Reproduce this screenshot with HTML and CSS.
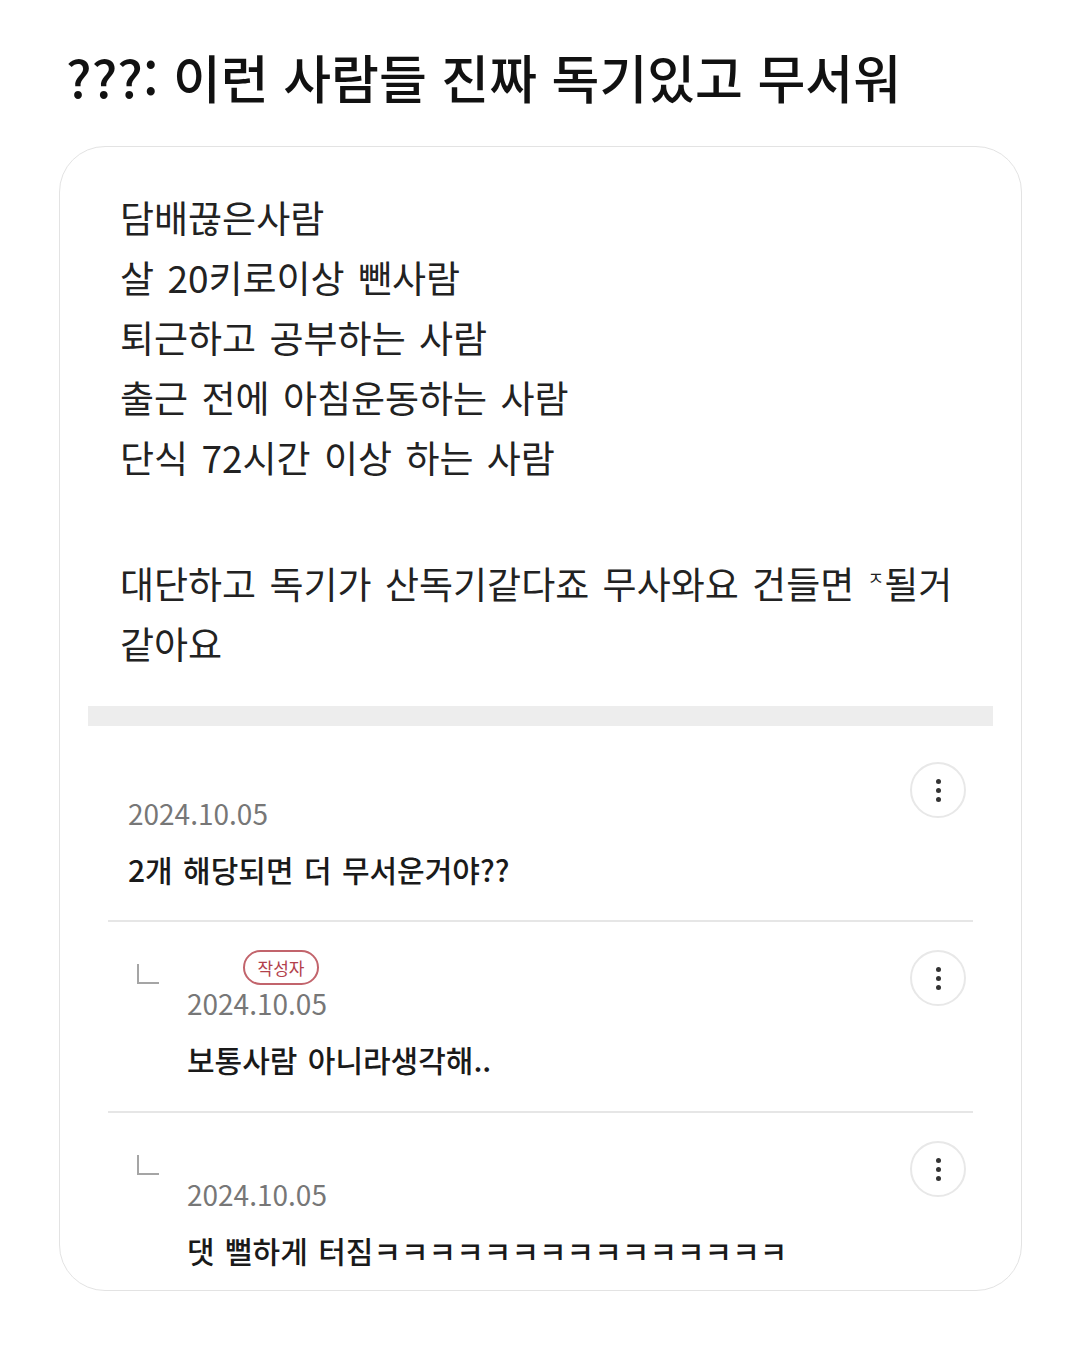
FILE: index.html
```html
<!DOCTYPE html>
<html lang="ko">
<head>
    <meta charset="UTF-8">
    <meta name="viewport" content="width=device-width, initial-scale=1.0">
    <title>독기</title>
    <link rel="stylesheet" href="styles.css">
</head>
<body>
    <h1 class="title">???: 이런 사람들 진짜 독기있고 무서워</h1>

    <div class="card">
        <div class="post">
            <p>담배끊은사람</p>
            <p>살 20키로이상 뺀사람</p>
            <p>퇴근하고 공부하는 사람</p>
            <p>출근 전에 아침운동하는 사람</p>
            <p>단식 72시간 이상 하는 사람</p>
            <p>&nbsp;</p>
            <p>대단하고 독기가 산독기같다죠 무사와요 건들면 <span class="jamo">ㅈ</span>될거<br>같아요</p>
        </div>

        <div class="bar"></div>

        <div class="comments">
            <div class="comment">
                <div class="main">
                    <div class="date">2024.10.05</div>
                    <div class="text">2개 해당되면 더 무서운거야??</div>
                </div>
                <div class="kebab"><span></span><span></span><span></span></div>
            </div>

            <div class="comment reply">
                <div class="arrow"></div>
                <div class="main">
                    <div class="meta"><span class="badge">작성자</span></div>
                    <div class="date">2024.10.05</div>
                    <div class="text">보통사람 아니라생각해..</div>
                </div>
                <div class="kebab"><span></span><span></span><span></span></div>
            </div>

            <div class="comment reply">
                <div class="arrow"></div>
                <div class="main">
                    <div class="meta"></div>
                    <div class="date">2024.10.05</div>
                    <div class="text">댓 뻘하게 터짐ㅋㅋㅋㅋㅋㅋㅋㅋㅋㅋㅋㅋㅋㅋㅋ</div>
                </div>
                <div class="kebab"><span></span><span></span><span></span></div>
            </div>
        </div>
    </div>
</body>
</html>
```

FILE: styles.css
```css
body{
    margin: 0;
    background-color: #fff;
    font-family: "Noto Sans CJK KR", "Noto Sans", sans-serif;
    color: #1c1c1c;
}
.title{
    margin: 47px 0 39px 66px;
    font-size: 52px;
    line-height: 60px;
    font-weight: 500;
    color: #111;
    white-space: nowrap;
}
.card{
    margin-left: 59px;
    width: 963px;
    box-sizing: border-box;
    border: 1.5px solid #e3e3e3;
    border-radius: 46px;
    padding-bottom: 20px;
}
.post{
    padding: 40px 40px 0 60px;
}
.post p{
    margin: 0;
    font-size: 37px;
    line-height: 60px;
    word-spacing: 3px;
    color: #222;
    white-space: nowrap;
}
.jamo{
    font-size: 18px;
    vertical-align: 14px;
}
.bar{
    margin: 33px 28px 0 28px;
    height: 20px;
    background-color: #ededed;
}
.comments{
    padding: 0 48px;
}
.comment{
    display: flex;
    align-items: flex-start;
    padding: 36px 7px 31px 20px;
    border-bottom: 2px solid #e6e6e6;
}
.comment:last-child{
    border-bottom: none;
    padding-bottom: 0;
}
.comment .main{
    flex: 1;
}
.comment .date{
    margin-top: 31px;
    font-size: 28px;
    line-height: 40px;
    color: #777;
}
.comment .text{
    margin-top: 16px;
    font-size: 30px;
    line-height: 40px;
    font-weight: 500;
    word-spacing: 2px;
    color: #1a1a1a;
}
.reply{
    padding: 28px 7px 32px 29px;
}
.reply .arrow{
    width: 20px;
    height: 18px;
    margin: 14px 28px 0 0;
    border-left: 2px solid #a5a5a5;
    border-bottom: 2px solid #a5a5a5;
}
.reply .meta{
    height: 34px;
    padding-left: 56px;
}
.reply .date{
    margin-top: 0;
    line-height: 38px;
}
.reply .text{
    margin-top: 17px;
}
.badge{
    display: inline-block;
    box-sizing: border-box;
    width: 76px;
    height: 35px;
    border: 2px solid #c2646c;
    border-radius: 18px;
    color: #b2414b;
    font-size: 17px;
    line-height: 31px;
    text-align: center;
}
.kebab{
    width: 56px;
    height: 56px;
    box-sizing: border-box;
    border: 2px solid #e8e8e8;
    border-radius: 50%;
    display: flex;
    flex-direction: column;
    align-items: center;
    justify-content: center;
    gap: 4px;
}
.kebab span{
    width: 5px;
    height: 5px;
    border-radius: 50%;
    background-color: #333;
}
```
